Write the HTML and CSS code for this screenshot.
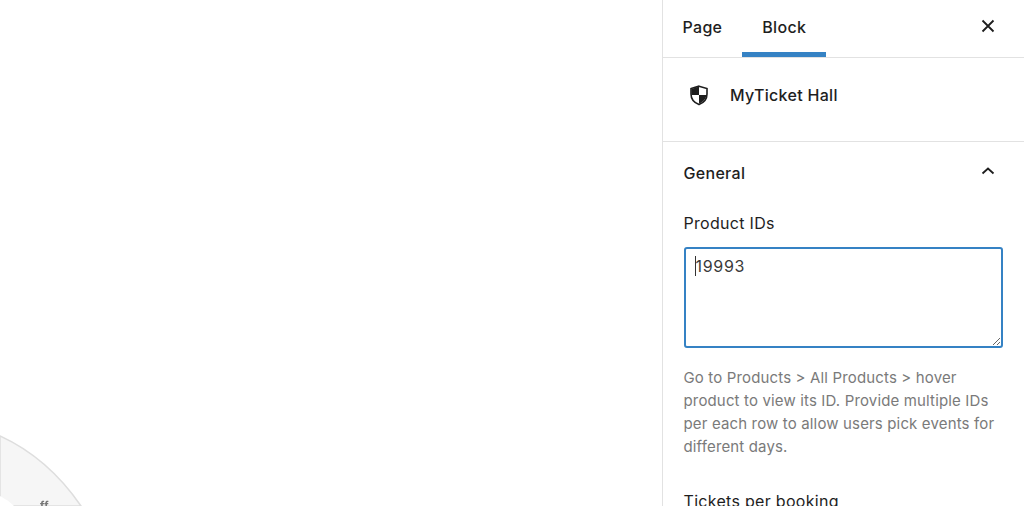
FILE: index.html
```html
<!DOCTYPE html>
<html lang="en">
<head>
<meta charset="utf-8">
<title>MyTicket Hall</title>
<link rel="stylesheet" href="styles.css">
</head>
<body>
<div class="editor">
  <main class="canvas">
    <svg class="hall" width="120" height="100" viewBox="0 0 120 100">
      <path d="M0 30 Q48 52 81 100 L0 100 Z" fill="#f6f6f6" stroke="#dedede" stroke-width="1.5"/>
      <path d="M0 90 Q8 94 14 100 L0 100 Z" fill="#fff"/>
      <text x="40" y="103" class="seat">ff</text>
    </svg>
  </main>
  <aside class="sidebar">
    <header class="tabs">
      <button class="tab">Page</button>
      <button class="tab active">Block</button>
      <button class="close" aria-label="Close">
        <svg width="24" height="24" viewBox="0 0 24 24"><path d="M6.5 6.5l11 11M17.5 6.5l-11 11" stroke="#1e1e1e" stroke-width="1.8" fill="none"/></svg>
      </button>
    </header>
    <section class="card">
      <svg class="shield" width="24" height="24" viewBox="0 0 24 24">
        <path d="M12 3.2 L20 5.6 V11 C20 16 17 19.6 12 21.6 C7 19.6 4 16 4 11 V5.6 Z" fill="none" stroke="#1e1e1e" stroke-width="1.6"/>
        <path d="M12 3.5 V12 H4.4 V6 Z M12 12 H19.4 C19 16 16 19 12 20.6 Z" fill="#1e1e1e"/>
      </svg>
      <span class="card-title">MyTicket Hall</span>
    </section>
    <section class="panel">
      <div class="panel-head">
        <span>General</span>
        <svg width="24" height="24" viewBox="0 0 24 24"><path d="M6.5 14.5 L12 9.5 L17.5 14.5" stroke="#1e1e1e" stroke-width="1.8" fill="none"/></svg>
      </div>
      <label class="label" for="ids">Product IDs</label>
      <div class="field">
        <textarea id="ids" class="input">19993</textarea>
        <span class="caret"></span>
      </div>
      <p class="help">Go to Products &gt; All Products &gt; hover product to view its ID. Provide multiple IDs per each row to allow users pick events for different days.</p>
      <div class="label next">Tickets per booking</div>
    </section>
  </aside>
</div>
</body>
</html>
```
FILE: styles.css
```css
* { box-sizing: border-box; }
html, body { margin: 0; height: 100%; overflow: hidden; background: #fff; }
body { font-family: Inter, "Liberation Sans", sans-serif; color: #1e1e1e; font-size: 16px; letter-spacing: 0.3px; }
.editor { display: flex; height: 506px; }
.canvas { flex: 0 0 662px; position: relative; overflow: hidden; }
.hall { position: absolute; left: 0; bottom: 0; filter: blur(0.4px); }
.seat { font-size: 11px; fill: #777; font-weight: 700; }
.sidebar { flex: 1; border-left: 1.5px solid #e2e2e2; overflow: hidden; }
.tabs { display: flex; height: 58px; border-bottom: 1.5px solid #e2e2e2; align-items: stretch; padding-right: 24px; padding-left: 0; }
.tab { background: none; border: 0; padding: 1px 20px 0 19.5px; margin: 0; font: 500 16px Inter, "Liberation Sans", sans-serif; letter-spacing: 0.3px; color: #1e1e1e; height: 57px; border-bottom: 5px solid transparent; }
.tab.active { border-bottom-color: #3582c4; padding-left: 20px; }
.close { margin-left: auto; background: none; border: 0; padding: 0 0 2px; display: flex; align-items: center; height: 54px; }
.card { height: 84px; border-bottom: 1.5px solid #e2e2e2; display: flex; align-items: flex-start; padding: 25px 0 0 24px; gap: 19px; }
.card-title { font-weight: 500; line-height: 24px; }
.panel { padding: 0 20px 0 20.5px; }
.panel-head { display: flex; justify-content: space-between; align-items: center; font-weight: 500; height: 24px; margin-top: 19px; }
.panel-head svg { margin-right: 4px; margin-top: -4px; }
.label { display: block; line-height: 24px; margin-top: 26px; }
.field { position: relative; margin-top: 12px; height: 101px; }
.input { display: block; width: 319.5px; height: 101px; border: 2px solid #3582c4; border-radius: 3px; padding: 6px 10px; font: 16px/23px Inter, "Liberation Sans", sans-serif; letter-spacing: 0.7px; color: #3a3a3a; outline: 0; background: #fff; resize: vertical; }
.caret { position: absolute; left: 11px; top: 9px; width: 1px; height: 20px; background: #333; }
.help { margin: 17.5px 0 0; width: 320px; color: #7a7a7a; font-size: 15px; line-height: 23px; letter-spacing: 0.15px; }
.next { margin-top: 31.5px; }
```
